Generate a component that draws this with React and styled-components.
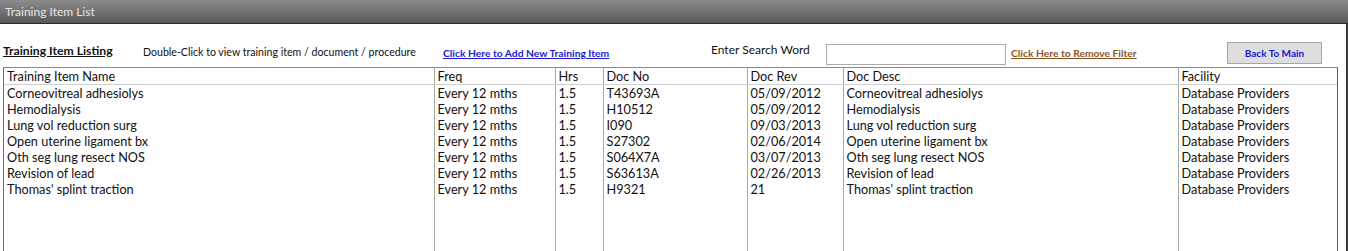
import styled, { createGlobalStyle } from 'styled-components';

const GlobalStyle = createGlobalStyle`
body {
  margin: 0;
  background: #fff;
  font-family: Lato, "Open Sans", sans-serif;
  color: #111;
}
`;

const columns = [
  { key: 'name', title: 'Training Item Name', width: 430 },
  { key: 'freq', title: 'Freq', width: 121 },
  { key: 'hrs', title: 'Hrs', width: 48 },
  { key: 'docNo', title: 'Doc No', width: 144 },
  { key: 'docRev', title: 'Doc Rev', width: 96 },
  { key: 'docDesc', title: 'Doc Desc', width: 335 },
  { key: 'facility', title: 'Facility', width: 161 },
];

const items = [
  { name: 'Corneovitreal adhesiolys', docNo: 'T43693A', docRev: '05/09/2012' },
  { name: 'Hemodialysis', docNo: 'H10512', docRev: '05/09/2012' },
  { name: 'Lung vol reduction surg', docNo: 'I090', docRev: '09/03/2013' },
  { name: 'Open uterine ligament bx', docNo: 'S27302', docRev: '02/06/2014' },
  { name: 'Oth seg lung resect NOS', docNo: 'S064X7A', docRev: '03/07/2013' },
  { name: 'Revision of lead', docNo: 'S63613A', docRev: '02/26/2013' },
  { name: "Thomas' splint traction", docNo: 'H9321', docRev: '21' },
].map(item => ({
  ...item,
  freq: 'Every 12 mths',
  hrs: '1.5',
  docDesc: item.name,
  facility: 'Database Providers',
}));

const App = () => {
  return (
    <>
      <GlobalStyle />
      <Window>
        <TitleBar>Training Item List</TitleBar>
        <Body>
          <Toolbar>
            <Heading>Training Item Listing</Heading>
            <Hint>Double-Click to view training item / document / procedure</Hint>
            <LinkText href="#" color="#1c1cd6">Click Here to Add New Training Item</LinkText>
            <SearchLabel>Enter Search Word</SearchLabel>
            <SearchInput type="text" />
            <LinkText href="#" color="#8e5424">Click Here to Remove Filter</LinkText>
            <MainButton>Back To Main</MainButton>
          </Toolbar>
          <ListBox>
            <Grid>
              <colgroup>
                {columns.map(c => <col key={c.key} style={{ width: c.width }} />)}
              </colgroup>
              <thead>
                <tr>
                  {columns.map(c => <HeadCell key={c.key}>{c.title}</HeadCell>)}
                </tr>
              </thead>
              <tbody>
                {items.map((item, i) => (
                  <tr key={i}>
                    {columns.map(c => <Cell key={c.key}>{item[c.key]}</Cell>)}
                  </tr>
                ))}
                <FillerRow>
                  {columns.map(c => <Cell key={c.key} />)}
                </FillerRow>
              </tbody>
            </Grid>
          </ListBox>
        </Body>
      </Window>
    </>
  );
};

const Window = styled.div`
width: 1348px;
height: 251px;
overflow: hidden;
display: flex;
flex-direction: column;
`;

const TitleBar = styled.div`
height: 24px;
box-sizing: border-box;
padding: 4px 5px 0;
background: linear-gradient(#8c8c8c, #585858);
border-bottom: 1px solid #2b2b2b;
color: #e4e4e4;
font-size: 12px;
flex-shrink: 0;
`;

const Body = styled.div`
flex: 1;
border-right: 2px solid #3a3a3a;
padding: 0 8px 0 3px;
`;

const Toolbar = styled.div`
display: grid;
grid-template-columns: 140px 300px 268px 115px 185px 216px 95px;
align-items: center;
height: 43px;
`;

const Heading = styled.div`
font-size: 12.2px;
font-weight: bold;
text-decoration: underline;
padding-top: 9px;
`;

const Hint = styled.div`
font-size: 10.6px;
padding-top: 13px;
`;

const LinkText = styled.a`
font-size: 10.3px;
font-weight: bold;
color: ${p => p.color};
text-decoration: underline;
padding-top: 15px;
`;

const SearchLabel = styled.div`
font-size: 12px;
padding-top: 8px;
`;

const SearchInput = styled.input`
width: 180px;
height: 21px;
box-sizing: border-box;
margin: 17px 0 0;
border: 1px solid #ababab;
padding: 0;
outline: none;
`;

const MainButton = styled.button`
width: 95px;
height: 22px;
margin-top: 15px;
background: #dedede;
border: 1px solid #a6a6a6;
color: #1616d2;
font-family: inherit;
font-size: 10px;
font-weight: bold;
padding: 0;
`;

const ListBox = styled.div`
border: 1px solid #8a8a8a;
border-left-color: #6e6e6e;
border-right-color: #5c5c5c;
height: 200px;
overflow: hidden;
`;

const Grid = styled.table`
table-layout: fixed;
border-collapse: collapse;
width: 100%;
font-size: 12.7px;
`;

const HeadCell = styled.th`
text-align: left;
font-weight: normal;
height: 16px;
padding: 0 3px;
line-height: 15px;
border-left: 1px solid #a8a8a8;
border-bottom: 1px solid #cfcfcf;
white-space: nowrap;
overflow: hidden;
&:first-child { border-left: none; }
`;

const Cell = styled.td`
height: 16px;
padding: 0 3px;
line-height: 16px;
border-left: 1px solid #a8a8a8;
white-space: nowrap;
overflow: hidden;
&:first-child { border-left: none; }
`;

const FillerRow = styled.tr`
td { height: 120px; }
`;

export default App;
